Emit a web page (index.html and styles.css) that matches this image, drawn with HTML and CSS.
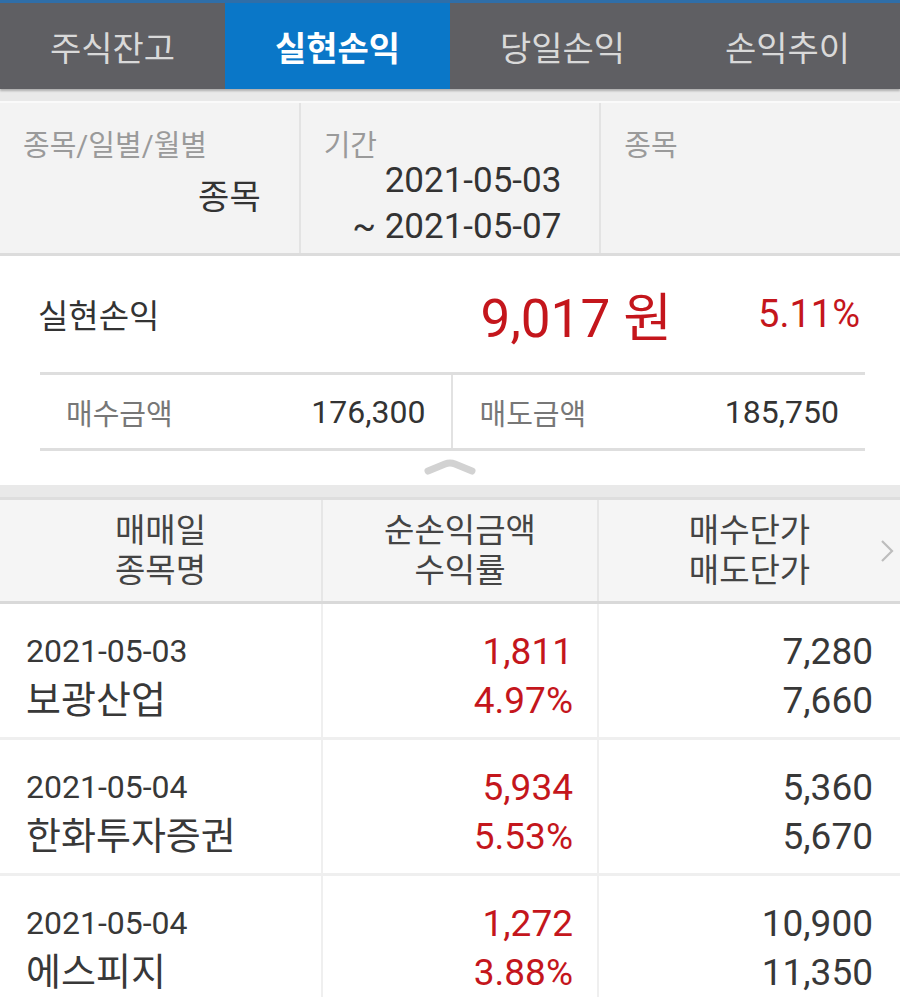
FILE: index.html
```html
<!DOCTYPE html>
<html lang="ko">
<head>
    <meta charset="UTF-8">
    <meta name="viewport" content="width=device-width, initial-scale=1.0">
    <title>실현손익</title>
<link rel="stylesheet" href="styles.css">
</head>
<body>
<div class="tabs">
    <div class="tab">주식잔고</div>
    <div class="tab on">실현손익</div>
    <div class="tab">당일손익</div>
    <div class="tab">손익추이</div>
</div>
<div class="gap"></div>

<div class="filter">
    <div class="fcol">
        <div class="flabel">종목/일별/월별</div>
        <div class="fval type">종목</div>
    </div>
    <div class="fcol">
        <div class="flabel">기간</div>
        <div class="fval period">2021-05-03<br>~ 2021-05-07</div>
    </div>
    <div class="fcol">
        <div class="flabel">종목</div>
    </div>
</div>

<div class="summary">
    <div class="total">
        <span class="total-label">실현손익</span>
        <span class="total-amt">9,017 원</span>
        <span class="total-rate">5.11%</span>
    </div>
    <div class="amounts">
        <div class="amt">
            <span class="amt-label">매수금액</span>
            <span class="amt-val">176,300</span>
        </div>
        <div class="amt">
            <span class="amt-label">매도금액</span>
            <span class="amt-val">185,750</span>
        </div>
    </div>
    <div class="fold">
        <svg width="54" height="18" viewBox="0 0 54 18"><path d="M5 13 L22 6 Q27 4 32 6 L49 13" fill="none" stroke="#d2d2d2" stroke-width="7" stroke-linecap="round" stroke-linejoin="round"/></svg>
    </div>
</div>
<div class="gap gap2"></div>

<div class="thead">
    <div class="th c1">매매일<br>종목명</div>
    <div class="th c2">순손익금액<br>수익률</div>
    <div class="th c3">매수단가<br>매도단가</div>
    <svg class="more" width="16" height="26" viewBox="0 0 16 26"><path d="M3 3 L13 13 L3 23" fill="none" stroke="#bdbdbd" stroke-width="2.2"/></svg>
</div>

<div class="row">
    <div class="td c1"><span class="date">2021-05-03</span><span class="name">보광산업</span></div>
    <div class="td c2 up"><span>1,811</span><span>4.97%</span></div>
    <div class="td c3"><span>7,280</span><span>7,660</span></div>
</div>
<div class="row">
    <div class="td c1"><span class="date">2021-05-04</span><span class="name">한화투자증권</span></div>
    <div class="td c2 up"><span>5,934</span><span>5.53%</span></div>
    <div class="td c3"><span>5,360</span><span>5,670</span></div>
</div>
<div class="row">
    <div class="td c1"><span class="date">2021-05-04</span><span class="name">에스피지</span></div>
    <div class="td c2 up"><span>1,272</span><span>3.88%</span></div>
    <div class="td c3"><span>10,900</span><span>11,350</span></div>
</div>
</body>
</html>
```

FILE: styles.css
```css
body {margin: 0;background: #fff;font-family: Roboto, "Noto Sans CJK KR", sans-serif;color: #383838;width: 900px;overflow: hidden;}

.tabs {display: flex;height: 86px;background: #5f5f63;border-top: 3px solid #2f6ea8;box-shadow: 0 2px 2px rgba(0,0,0,0.25);position: relative;z-index: 1;}
.tab {flex: 1;display: flex;align-items: center;justify-content: center;font-size: 34px;color: #d9d9d9;}
.tab.on {background: #0a77c8;color: #fff;font-weight: bold;}

.gap {height: 12px;background: #e9e9e9;border-bottom: 2px solid #fafafa;}
.gap2 {height: 12px;border-bottom: 3px solid #dedede;}

.filter {display: flex;height: 150px;background: #f3f3f3;border-bottom: 3px solid #dcdcdc;}
.fcol {flex: 1;display: flex;flex-direction: column;padding: 26px 38px 0 23px;border-right: 2px solid #e3e3e3;}
.fcol:last-child {border-right: none;}
.flabel {font-size: 29px;line-height: 34px;color: #9a9a9a;}
.fval {text-align: right;color: #333;}
.type {font-size: 34px;line-height: 46px;margin-top: 11px;}
.period {font-size: 35px;line-height: 46px;margin-top: -5px;}

.summary {background: #fff;}
.total {display: flex;align-items: center;height: 116px;padding: 0 40px 0 38px;}
.total-label {font-size: 33px;flex: 1;color: #333;}
.total-amt {font-size: 53px;color: #c4161c;margin-right: 86px;}
.total-rate {font-size: 38px;color: #c4161c;}

.amounts {display: flex;margin: 0 35px 0 40px;border-top: 3px solid #dedede;border-bottom: 3px solid #dedede;height: 73px;}
.amt {flex: 1;display: flex;align-items: center;justify-content: space-between;padding: 0 26px 0 27px;}
.amt:first-child {border-right: 2px solid #e2e2e2;padding: 0 25px 0 26px;}
.amt-label {font-size: 29px;color: #777;}
.amt-val {font-size: 32px;color: #333;}

.fold {height: 34px;display: flex;justify-content: center;align-items: flex-start;padding-top: 7px;box-sizing: border-box;}

.thead {display: flex;height: 101px;background: #f5f5f5;border-bottom: 3px solid #d9d9d9;position: relative;}
.th {display: flex;align-items: center;justify-content: center;text-align: center;font-size: 33px;line-height: 40px;color: #444;}
.c1 {width: 323px;border-right: 2px solid #e6e6e6;box-sizing: border-box;}
.c2 {width: 276px;border-right: 2px solid #e6e6e6;box-sizing: border-box;}
.c3 {flex: 1;}
.more {position: absolute;right: 5px;top: 38px;}

.row {display: flex;height: 133px;border-bottom: 3px solid #efefef;}
.row .c1, .row .c2 {border-right-color: #efefef;}
.td {display: flex;flex-direction: column;padding: 23px 24px 0 26px;box-sizing: border-box;font-size: 37px;line-height: 49px;}
.td.c1 {align-items: flex-start;}
.td.c2, .td.c3 {align-items: flex-end;}
.td.c3 {padding-right: 27px;}
.date {font-size: 32px;}
.name {font-size: 38px;}
.up {color: #c4161c;}
```
